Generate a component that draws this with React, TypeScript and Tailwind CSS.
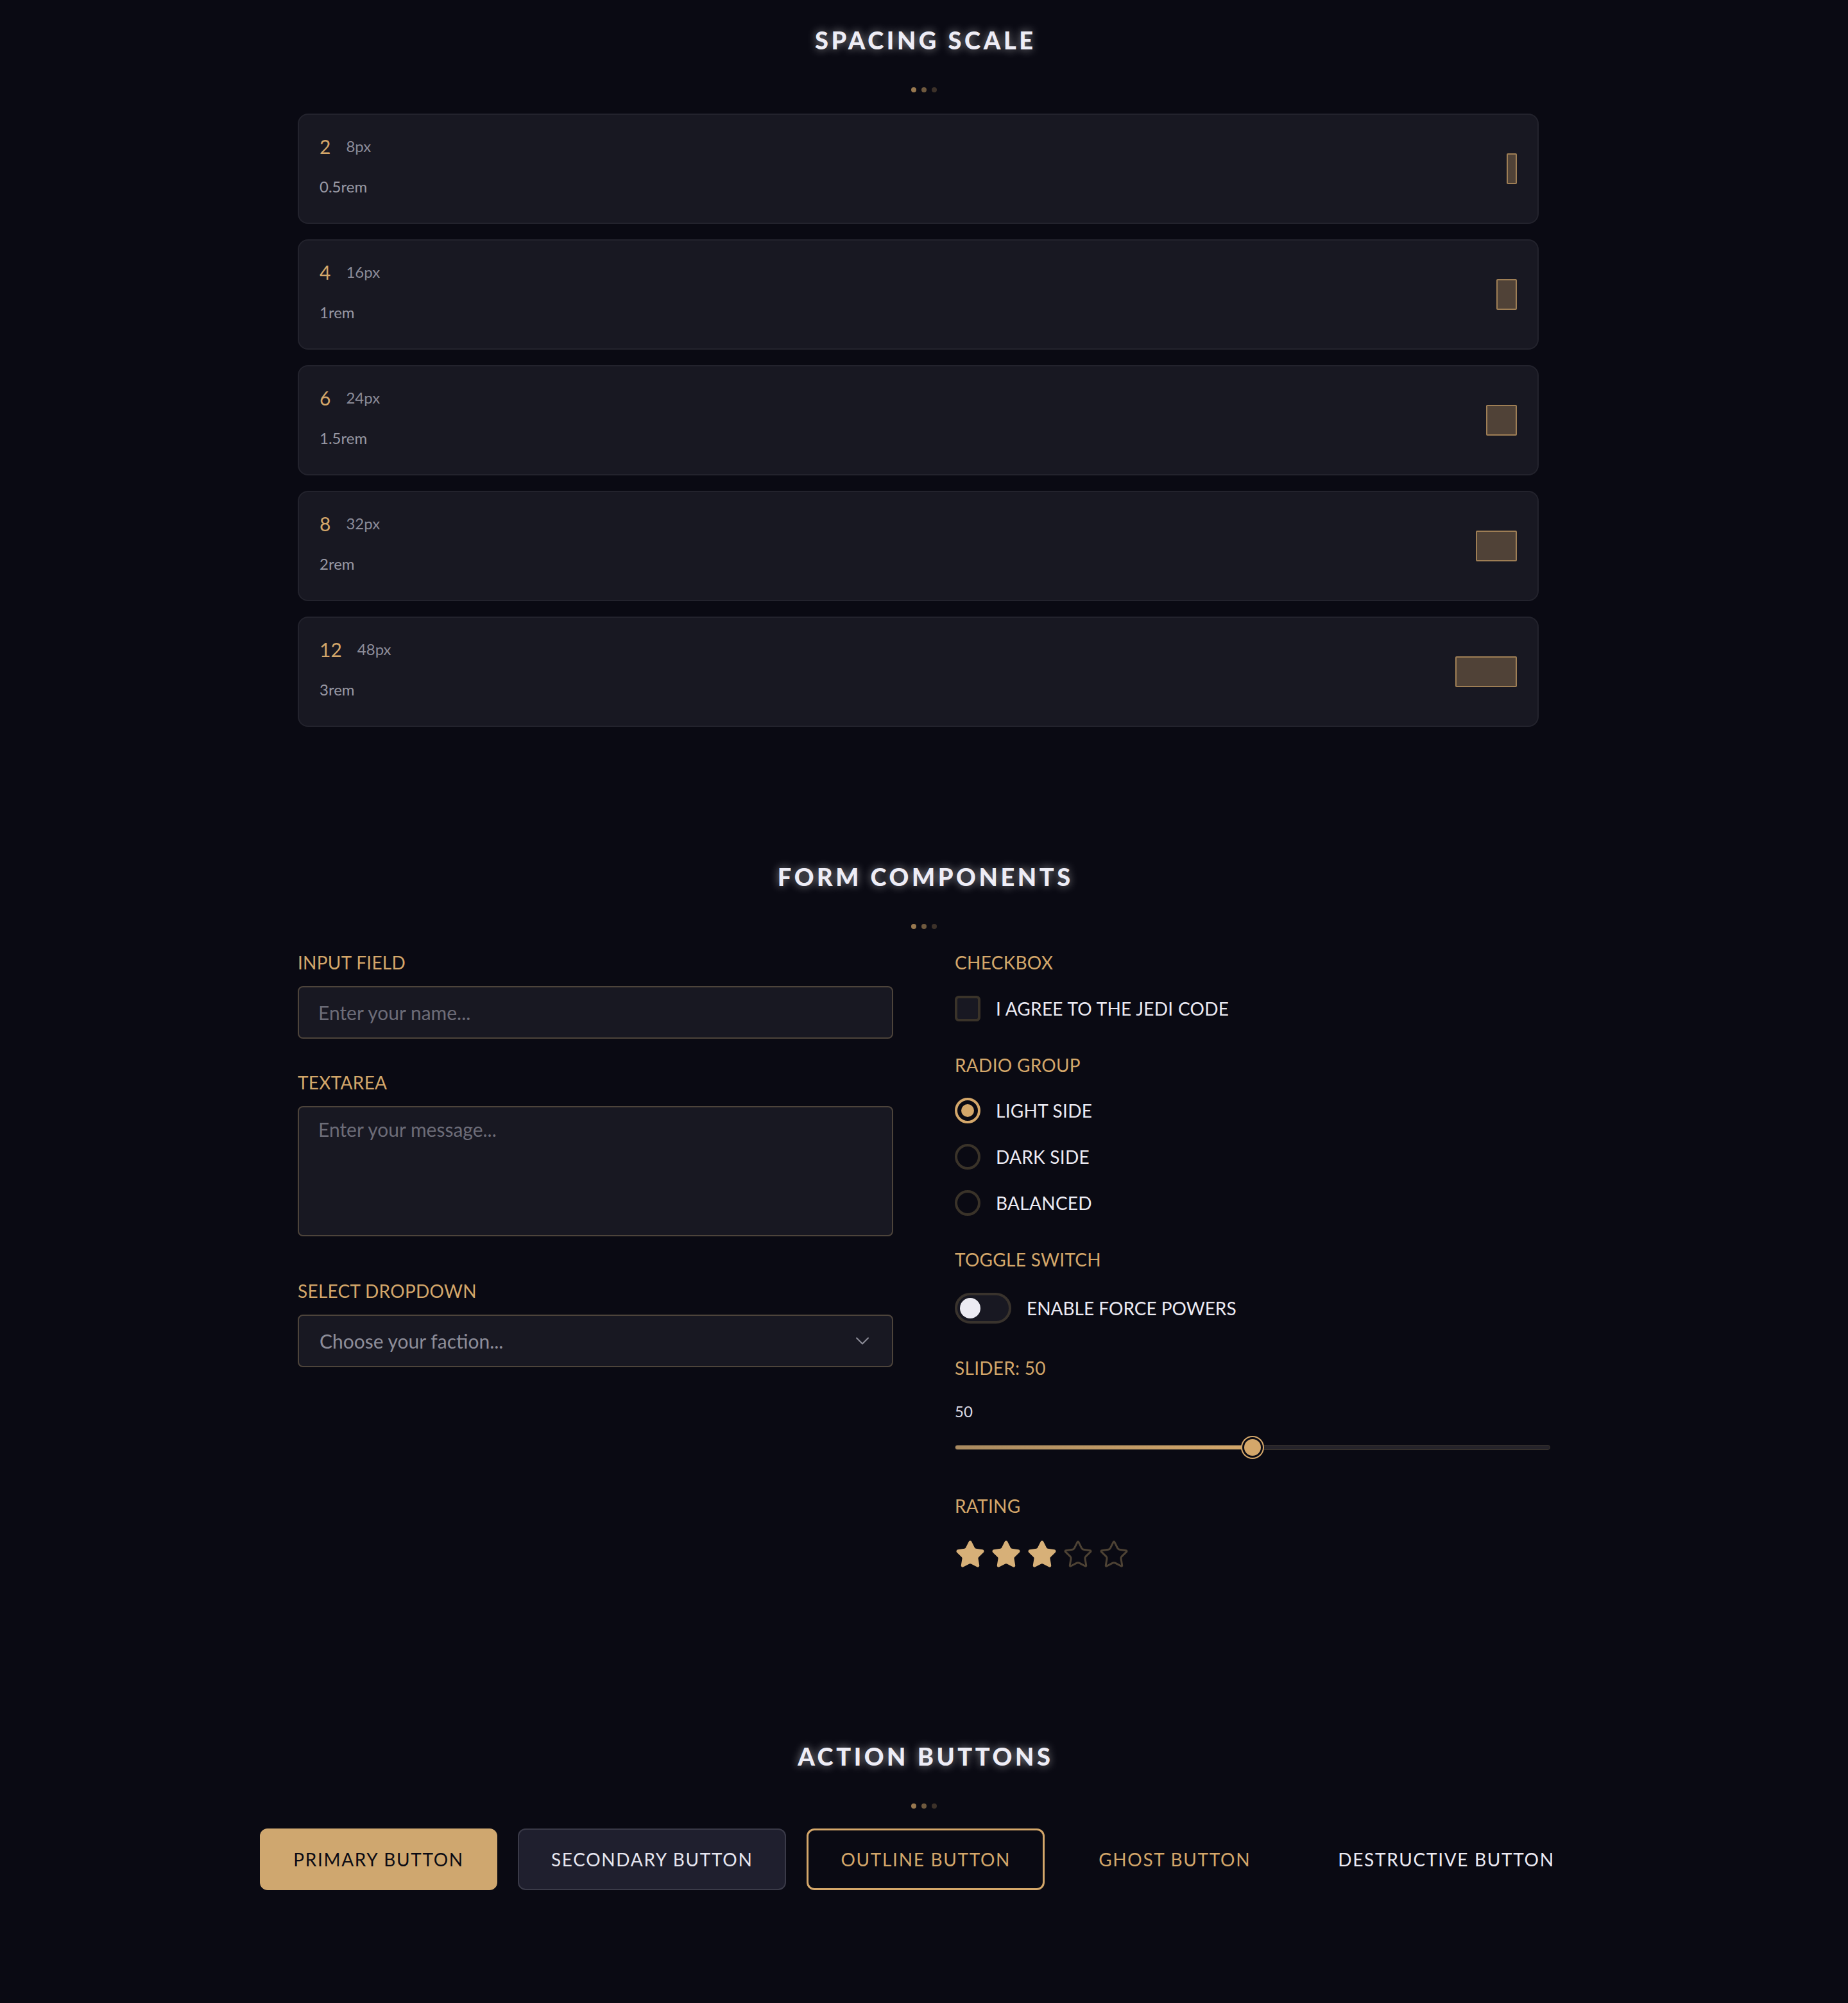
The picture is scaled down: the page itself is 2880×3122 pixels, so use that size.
import { Star, ChevronDown } from "lucide-react";

const scale = [
	{ n: "2", px: "8px", rem: "0.5rem", w: "w-[16px]" },
	{ n: "4", px: "16px", rem: "1rem", w: "w-[32px]" },
	{ n: "6", px: "24px", rem: "1.5rem", w: "w-[48px]" },
	{ n: "8", px: "32px", rem: "2rem", w: "w-[64px]" },
	{ n: "12", px: "48px", rem: "3rem", w: "w-[96px]" },
];

const Title = ({ children }: { children: string }) => {
	return (
		<h2 className="text-center text-[38px] leading-[56px] font-black tracking-[0.12em] pl-[0.12em] text-[#eeedf6] [text-shadow:0_0_14px_rgba(255,255,255,0.55)]">
			{children}
		</h2>
	);
};

const Dots = () => {
	return (
		<div className="flex justify-center gap-2 mt-[46px]">
			<span className="w-2 h-2 rounded-full bg-[#d4a76a]/70" />
			<span className="w-2 h-2 rounded-full bg-[#d4a76a]/50" />
			<span className="w-2 h-2 rounded-full bg-[#d4a76a]/25" />
		</div>
	);
};

const Label = ({ children, className = "" }: { children: string; className?: string }) => {
	return (
		<div className={`h-[40px] leading-[40px] text-[28px] tracking-[0.01em] uppercase text-[#d4a76a] ${className}`}>
			{children}
		</div>
	);
};

const Radio = ({ label, checked }: { label: string; checked?: boolean }) => {
	return (
		<div className="flex items-center gap-6 h-[40px]">
			<span
				className={`w-[40px] h-[40px] rounded-full border-4 flex items-center justify-center ${
					checked ? "border-[#d4a76a]" : "border-[#3a3329]"
				}`}
			>
				{checked && <span className="w-[20px] h-[20px] rounded-full bg-[#d4a76a]" />}
			</span>
			<span className="text-[28px] tracking-[0.01em] uppercase text-[#ecebf3]">{label}</span>
		</div>
	);
};

export default function App() {
	return (
		<div className="min-h-screen bg-[#0a0a13] font-[Lato,sans-serif] pt-[34px] pb-[174px]">
			{/* spacing scale */}
			<section className="w-[1952px] mx-auto">
				<Title>SPACING SCALE</Title>
				<Dots />
				<div className="mt-[33px] w-[1934px] flex flex-col gap-6">
					{scale.map((s) => (
						<div
							key={s.n}
							className="h-[172px] px-[32px] flex items-center justify-between bg-[#181822] border-2 border-[#23232d] rounded-[16px]"
						>
							<div className="self-start pt-[31px] flex flex-col">
								<div className="flex items-center gap-6 h-[36px]">
									<span className="text-[30px] leading-[36px] text-[#d4a76a]">{s.n}</span>
									<span className="text-[24px] text-[#8b8b98]">{s.px}</span>
								</div>
								<span className="mt-[27px] text-[24px] leading-[36px] text-[#9898a4]">{s.rem}</span>
							</div>
							<div className={`h-[48px] ${s.w} bg-[#d4a76a]/30 border-2 border-[#d4a76a]/60 rounded-[2px]`} />
						</div>
					))}
				</div>
			</section>

			{/* form components */}
			<section className="w-[1952px] mx-auto mt-[205px]">
				<Title>FORM COMPONENTS</Title>
				<Dots />
				<div className="mt-[32px] grid grid-cols-2 gap-x-[96px] items-start">
					<div className="flex flex-col">
						<Label>Input Field</Label>
						<div className="mt-[17px] h-[82px] px-[30px] flex items-center bg-[#181822] border-2 border-[#4d443b] rounded-[8px] text-[30px] text-[#6c6c78]">
							Enter your name...
						</div>
						<Label className="mt-[48px]">Textarea</Label>
						<div className="mt-[17px] h-[203px] px-[30px] pt-[14px] bg-[#181822] border-2 border-[#4d443b] rounded-[8px] text-[30px] leading-[40px] text-[#6c6c78]">
							Enter your message...
						</div>
						<Label className="mt-[65px]">Select Dropdown</Label>
						<div className="mt-[17px] h-[82px] pl-[32px] pr-[28px] flex items-center justify-between bg-[#181822] border-2 border-[#4d443b] rounded-[8px] text-[30px] text-[#8d8d99]">
							<span>Choose your faction...</span>
							<ChevronDown size={36} strokeWidth={1.4} className="text-[#8d8d99]" />
						</div>
					</div>

					<div className="flex flex-col">
						<Label>Checkbox</Label>
						<div className="mt-[32px] flex items-center gap-6 h-[40px]">
							<span className="w-[40px] h-[40px] rounded-[6px] border-4 border-[#3a3329] bg-[#181822]" />
							<span className="text-[28px] tracking-[0.01em] uppercase text-[#ecebf3]">I agree to the Jedi Code</span>
						</div>

						<Label className="mt-[48px]">Radio Group</Label>
						<div className="mt-[31px] flex flex-col gap-[32px]">
							<Radio label="Light Side" checked />
							<Radio label="Dark Side" />
							<Radio label="Balanced" />
						</div>

						<Label className="mt-[48px]">Toggle Switch</Label>
						<div className="mt-[32px] flex items-center gap-6">
							<span className="w-[88px] h-[48px] rounded-full border-4 border-[#39332d] bg-[#181822] flex items-center px-[4px]">
								<span className="w-[32px] h-[32px] rounded-full bg-[#ecebf3]" />
							</span>
							<span className="text-[28px] uppercase text-[#ecebf3]">Enable Force Powers</span>
						</div>

						<Label className="mt-[49px]">Slider: 50</Label>
						<div className="mt-[30px] text-[24px] leading-[36px] text-[#dcdae4]">50</div>
						<div className="mt-[22px] relative h-[32px] flex items-center">
							<div className="w-full h-[8px] rounded-full bg-[#25232a] border border-[#3a342d] overflow-hidden">
								<div className="w-1/2 h-full bg-gradient-to-r from-[#a98a60] to-[#d4a76a]" />
							</div>
							<span className="absolute left-1/2 -translate-x-1/2 w-[32px] h-[32px] rounded-full bg-[#d4a76a] border-[3px] border-[#0a0a13] shadow-[0_0_0_2px_#d4a76a]" />
						</div>

						<Label className="mt-[55px]">Rating</Label>
						<div className="mt-[32px] flex gap-2">
							{[0, 1, 2, 3, 4].map((i) =>
								i < 3 ? (
									<Star key={i} size={48} strokeWidth={1.5} className="text-[#d7b078] fill-[#d7b078]" />
								) : (
									<Star key={i} size={48} strokeWidth={1.5} className="text-[#4d4234]" />
								),
							)}
						</div>
					</div>
				</div>
			</section>

			{/* action buttons */}
			<section className="mt-[262px]">
				<Title>ACTION BUTTONS</Title>
				<Dots />
				<div className="mt-[31px] flex justify-center gap-[32px] text-[28px]">
					<button className="h-[96px] px-[50px] rounded-[12px] border-2 border-[#cfa76f] bg-[#cfa76f] text-[#0b0b14] uppercase tracking-[0.06em]">
						Primary Button
					</button>
					<button className="h-[96px] px-[50px] rounded-[12px] border-2 border-[#3a3a48] bg-[#1f1f2e] text-[#e6e6f0] uppercase tracking-[0.06em]">
						Secondary Button
					</button>
					<button className="h-[96px] px-[50px] rounded-[12px] border-[3px] border-[#d4a76a] text-[#d4a76a] uppercase tracking-[0.06em]">
						Outline Button
					</button>
					<button className="h-[96px] px-[50px] rounded-[12px] border-2 border-transparent text-[#d4a76a] uppercase tracking-[0.06em]">
						Ghost Button
					</button>
					<button className="h-[96px] px-[50px] rounded-[12px] border-2 border-transparent text-[#ecebf3] uppercase tracking-[0.06em]">
						Destructive Button
					</button>
				</div>
			</section>
		</div>
	);
}
